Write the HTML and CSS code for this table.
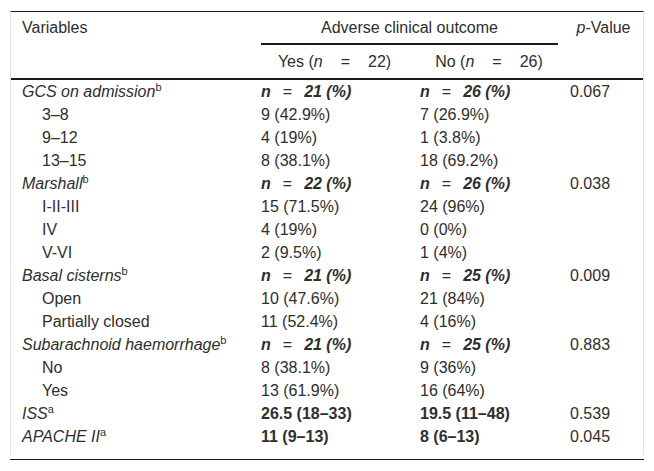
FILE: index.html
```html
<!DOCTYPE html>
<html>
<head>
<meta charset="utf-8">
<link rel="stylesheet" href="styles.css">
</head>
<body>
<div class="outer">
  <div class="box">
    <table class="t">
      <colgroup>
        <col class="c1"><col class="c2"><col class="c3"><col class="c4">
      </colgroup>
      <thead>
        <tr class="h1">
          <th class="var" rowspan="2">Variables</th>
          <th class="grp" colspan="2"><div class="grpline">Adverse clinical outcome</div></th>
          <th class="pv" rowspan="2"><i>p</i>-Value</th>
        </tr>
        <tr class="h2">
          <th class="sub">Yes (<i>n</i><span class="eq heq">=</span>22)</th>
          <th class="sub">No (<i>n</i><span class="eq heq">=</span>26)</th>
        </tr>
      </thead>
      <tbody>
        <tr><td class="cat"><i>GCS on admission</i><sup>b</sup></td><td><b><i>n</i></b><span class="eq">=</span><b><i>21 (%)</i></b></td><td><b><i>n</i></b><span class="eq">=</span><b><i>26 (%)</i></b></td><td>0.067</td></tr>
        <tr><td class="ind">3–8</td><td>9 (42.9%)</td><td>7 (26.9%)</td><td></td></tr>
        <tr><td class="ind">9–12</td><td>4 (19%)</td><td>1 (3.8%)</td><td></td></tr>
        <tr><td class="ind">13–15</td><td>8 (38.1%)</td><td>18 (69.2%)</td><td></td></tr>
        <tr><td class="cat"><i>Marshall</i><sup>b</sup></td><td><b><i>n</i></b><span class="eq">=</span><b><i>22 (%)</i></b></td><td><b><i>n</i></b><span class="eq">=</span><b><i>26 (%)</i></b></td><td>0.038</td></tr>
        <tr><td class="ind">I-II-III</td><td>15 (71.5%)</td><td>24 (96%)</td><td></td></tr>
        <tr><td class="ind">IV</td><td>4 (19%)</td><td>0 (0%)</td><td></td></tr>
        <tr><td class="ind">V-VI</td><td>2 (9.5%)</td><td>1 (4%)</td><td></td></tr>
        <tr><td class="cat"><i>Basal cisterns</i><sup>b</sup></td><td><b><i>n</i></b><span class="eq">=</span><b><i>21 (%)</i></b></td><td><b><i>n</i></b><span class="eq">=</span><b><i>25 (%)</i></b></td><td>0.009</td></tr>
        <tr><td class="ind">Open</td><td>10 (47.6%)</td><td>21 (84%)</td><td></td></tr>
        <tr><td class="ind">Partially closed</td><td>11 (52.4%)</td><td>4 (16%)</td><td></td></tr>
        <tr><td class="cat"><i>Subarachnoid haemorrhage</i><sup>b</sup></td><td><b><i>n</i></b><span class="eq">=</span><b><i>21 (%)</i></b></td><td><b><i>n</i></b><span class="eq">=</span><b><i>25 (%)</i></b></td><td>0.883</td></tr>
        <tr><td class="ind">No</td><td>8 (38.1%)</td><td>9 (36%)</td><td></td></tr>
        <tr><td class="ind">Yes</td><td>13 (61.9%)</td><td>16 (64%)</td><td></td></tr>
        <tr><td class="cat"><i>ISS</i><sup>a</sup></td><td><b>26.5 (18–33)</b></td><td><b>19.5 (11–48)</b></td><td>0.539</td></tr>
        <tr><td class="cat"><i>APACHE II</i><sup>a</sup></td><td><b>11 (9–13)</b></td><td><b>8 (6–13)</b></td><td>0.045</td></tr>
      </tbody>
    </table>
  </div>
  <div class="endrule"></div>
</div>
</body>
</html>
```

FILE: styles.css
```css
html, body {
  margin: 0;
  padding: 0;
  background: #fff;
}
body {
  font-family: "Liberation Sans", Arial, sans-serif;
  font-size: 16px;
  color: #2e2e2e;
}
.outer {
  width: 634px;
  margin: 11px 0 0 10px;
}
.box {
  border-top: 1px solid #1a1a1a;
  border-left: 1px solid #e4e4e4;
  border-right: 1px solid #e4e4e4;
  padding-bottom: 7px;
}
.endrule {
  margin-top: 4px;
  border-top: 1px solid #1a1a1a;
}
.t {
  width: 632px;
  table-layout: fixed;
  border-collapse: collapse;
  line-height: 17px;
}
.c1 { width: 244px; }
.c2 { width: 159px; }
.c3 { width: 150px; }
.c4 { width: 79px; }
th {
  font-weight: normal;
  padding: 0 6px;
}
.h1 th {
  padding-top: 7px;
  padding-bottom: 0;
  vertical-align: top;
}
.var {
  text-align: left;
  padding-left: 11px;
}
.pv {
  text-align: center;
}
.grp {
  text-align: center;
}
.grpline {
  border-bottom: 2px solid #1a1a1a;
  padding-bottom: 7px;
}
.h2 th {
  padding-top: 8px;
  padding-bottom: 8px;
  text-align: center;
}
thead {
  border-bottom: 2px solid #1a1a1a;
}
.sub {
  text-align: center;
}
.eq {
  margin: 0 12px;
  font-weight: normal;
  font-style: normal;
}
.heq {
  margin: 0 18px;
}
td {
  padding: 3px 6px;
  text-align: left;
  vertical-align: top;
  white-space: nowrap;
}
td.cat, td.ind {
  padding-left: 11px;
}
td.ind {
  padding-left: 31px;
}
sup {
  font-size: 11px;
  line-height: 0;
  vertical-align: 6px;
}
```
